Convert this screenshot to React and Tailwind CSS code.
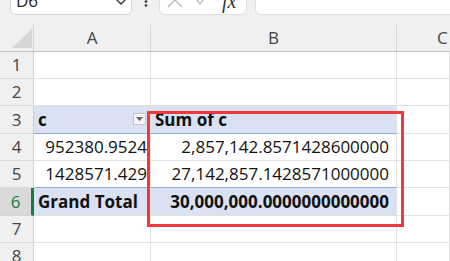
import React from "react";

const rowH = "h-[27.33px]";

const RowHead = ({ n, selected }) => (
  <div
    className={
      selected
        ? "w-[34px] shrink-0 flex items-center justify-center bg-[#d9d9d9] border-r-[3px] border-r-[#107c41] border-b border-b-[#d4d4d4] text-[#107c41] text-[17px]"
        : "w-[34px] shrink-0 flex items-center justify-center bg-[#f0f0f0] border-r border-r-[#cfcfcf] border-b border-b-[#dcdcdc] text-[#444] text-[17px]"
    }
  >
    {n}
  </div>
);

const Cell = ({ className = "", children }) => (
  <div
    className={
      "flex items-center border-r border-b border-[#e1e1e1] text-[17px] text-[#111] whitespace-nowrap overflow-visible " +
      className
    }
  >
    {children}
  </div>
);

export default function App() {
  return (
    <div className="relative w-[450px] h-[261px] overflow-hidden bg-white font-['Open_Sans',sans-serif]">
      {/* formula bar */}
      <div className="flex items-start h-[25px] bg-[#f0f0f0] overflow-hidden">
        <div className="ml-[10px] mt-[-15px] w-[122px] h-[30px] shrink-0 flex items-center bg-white border border-[#d6d6d6] rounded-[6px] pl-[5px] pr-[3px]">
          <span className="text-[17px] text-[#222] leading-none">D6</span>
          <svg className="ml-auto" width="14" height="10" viewBox="0 0 14 10">
            <path d="M1 3 L7 9 L13 3" fill="none" stroke="#333" strokeWidth="1.4" />
          </svg>
        </div>
        <svg className="ml-[12px] shrink-0" width="4" height="8" viewBox="0 0 4 8">
          <circle cx="2" cy="1.5" r="1.3" fill="#333" />
          <circle cx="2" cy="5.5" r="1.3" fill="#333" />
        </svg>
        <div className="ml-[11px] mt-[-15px] w-[88px] h-[30px] shrink-0 flex items-center bg-white border border-[#dedede] rounded-[6px] pl-[7px]">
          <svg width="16" height="16" viewBox="0 0 16 16">
            <path d="M1 1 L15 15 M15 1 L1 15" stroke="#b4b4b4" strokeWidth="1.2" fill="none" />
          </svg>
          <svg className="ml-[10px]" width="16" height="16" viewBox="0 0 16 16">
            <path d="M1 4 L7 12 L15 2" stroke="#b4b4b4" strokeWidth="1.2" fill="none" />
          </svg>
          <span className="ml-[13px] mt-[2px] text-[20px] italic text-[#333] font-['Liberation_Serif',serif] leading-none">
            fx
          </span>
        </div>
        <div className="ml-[8px] mt-[-15px] flex-1 h-[30px] bg-white border border-[#dedede] rounded-[6px] mr-[-8px]" />
      </div>

      {/* column headers */}
      <div className="flex h-[26.67px] bg-[#f0f0f0] border-b border-[#c4c4c4]">
        <div className="w-[34px] shrink-0 border-r border-[#d0d0d0]">
          <svg width="33" height="26" viewBox="0 0 33 26">
            <polygon points="12,23 32,23 32,4" fill="#d6d6d6" />
          </svg>
        </div>
        <div className="w-[117px] shrink-0 flex items-center justify-center border-r border-[#d6d6d6] text-[17px] text-[#444]">
          A
        </div>
        <div className="w-[246px] shrink-0 flex items-center justify-center border-r border-[#d6d6d6] text-[17px] text-[#444]">
          B
        </div>
        <div className="flex-1 flex items-center justify-center text-[17px] text-[#444] pr-[4px]">
          <span className="ml-[40px]">C</span>
        </div>
      </div>

      {/* rows */}
      {[1, 2].map((n) => (
        <div key={n} className={"flex " + rowH}>
          <RowHead n={n} />
          <Cell className="w-[117px] shrink-0" />
          <Cell className="w-[246px] shrink-0" />
          <Cell className="flex-1" />
        </div>
      ))}

      <div className={"flex " + rowH}>
        <RowHead n={3} />
        <Cell className="w-[117px] shrink-0 bg-[#d9e1f2] border-b-[#8ea9db] pl-[4px] pr-[4px] font-bold">
          <span>c</span>
          <div className="ml-auto w-[13px] h-[12px] flex items-center justify-center bg-[#f4f4f4] border border-[#c6c6c6]">
            <svg width="7" height="4" viewBox="0 0 7 4">
              <polygon points="0,0 7,0 3.5,4" fill="#666" />
            </svg>
          </div>
        </Cell>
        <Cell className="w-[246px] shrink-0 bg-[#d9e1f2] border-b-[#8ea9db] pl-[4px] font-bold">
          Sum of c
        </Cell>
        <Cell className="flex-1" />
      </div>

      <div className={"flex " + rowH}>
        <RowHead n={4} />
        <Cell className="w-[117px] shrink-0 justify-end pr-[3px]">952380.9524</Cell>
        <Cell className="w-[246px] shrink-0 justify-end pr-[7px]">2,857,142.8571428600000</Cell>
        <Cell className="flex-1" />
      </div>

      <div className={"flex " + rowH}>
        <RowHead n={5} />
        <Cell className="w-[117px] shrink-0 justify-end pr-[3px] border-b-[#8ea9db]">1428571.429</Cell>
        <Cell className="w-[246px] shrink-0 justify-end pr-[7px] border-b-[#8ea9db]">27,142,857.1428571000000</Cell>
        <Cell className="flex-1" />
      </div>

      <div className={"flex " + rowH}>
        <RowHead n={6} selected />
        <Cell className="w-[117px] shrink-0 bg-[#d9e1f2] pl-[4px] font-bold">Grand Total</Cell>
        <Cell className="w-[246px] shrink-0 bg-[#d9e1f2] justify-end pr-[7px] font-bold">
          30,000,000.0000000000000
        </Cell>
        <Cell className="flex-1" />
      </div>

      {[7, 8].map((n) => (
        <div key={n} className={"flex " + rowH}>
          <RowHead n={n} />
          <Cell className="w-[117px] shrink-0" />
          <Cell className="w-[246px] shrink-0" />
          <Cell className="flex-1" />
        </div>
      ))}

      {/* highlight rectangle */}
      <div className="absolute left-[147px] top-[111px] w-[257px] h-[116px] border-[3px] border-[#ee3a3c]" />
    </div>
  );
}
